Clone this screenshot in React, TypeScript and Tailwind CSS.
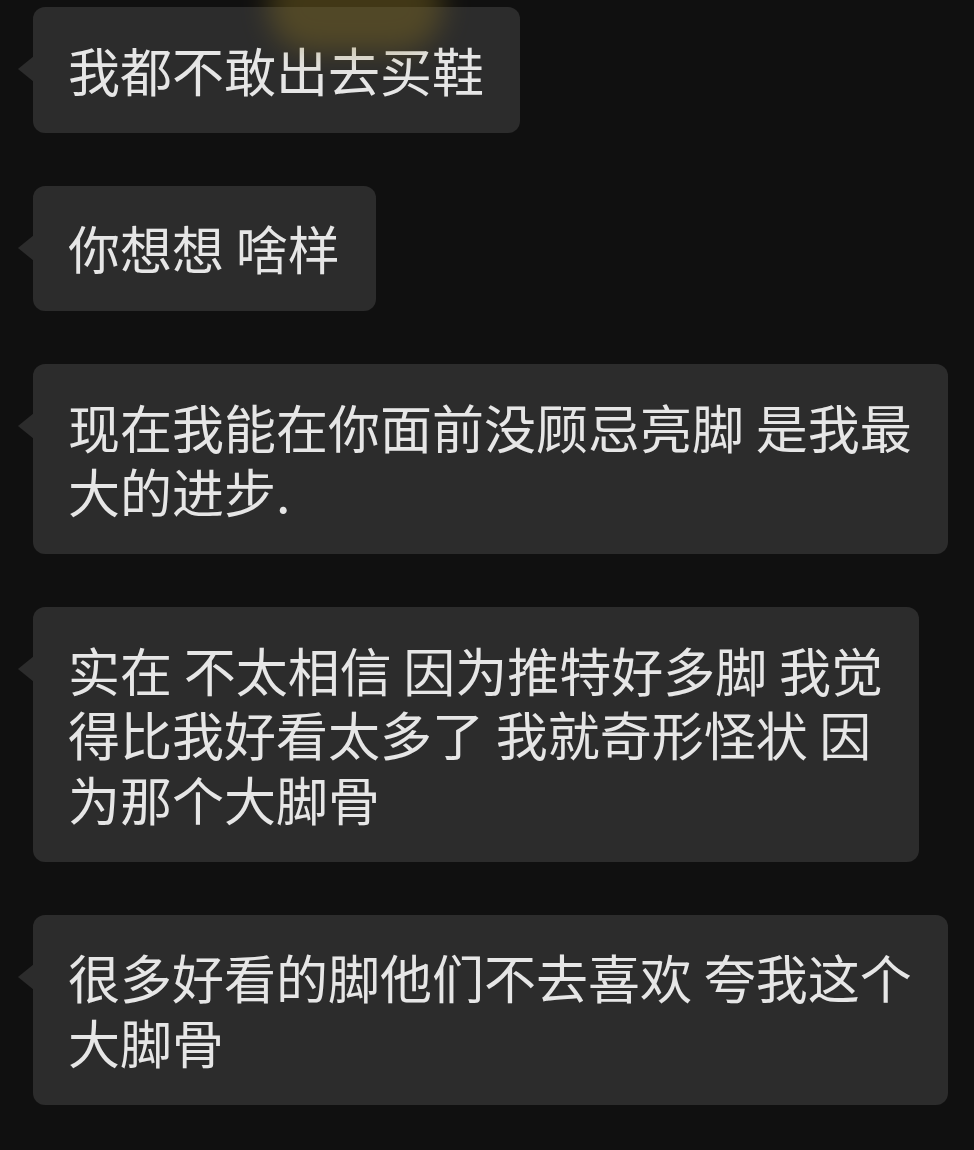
const messages: string[][] = [
  ['我都不敢出去买鞋'],
  ['你想想 啥样'],
  ['现在我能在你面前没顾忌亮脚 是我最', '大的进步.'],
  ['实在 不太相信 因为推特好多脚 我觉', '得比我好看太多了 我就奇形怪状 因', '为那个大脚骨'],
  ['很多好看的脚他们不去喜欢 夸我这个', '大脚骨'],
];

function Bubble({ lines }: { lines: string[] }) {
  return (
    <div className="relative ml-[33px] w-fit rounded-xl bg-[#2c2c2c] pl-[35px] pr-[36px] py-[30.5px]">
      {/* tail */}
      <div className="absolute left-[-15px] top-[49px] h-0 w-0 border-y-[13px] border-r-[16px] border-y-transparent border-r-[#2c2c2c]" />
      {lines.map((line, i) => (
        <div key={i} className="whitespace-pre text-[52px] leading-[64.5px] text-[#e6e6e6]">
          {line}
        </div>
      ))}
    </div>
  );
}

export default function App() {
  return (
    <div
      className="relative min-h-[1150px] w-[974px] overflow-hidden bg-[#101010] pt-[7px]"
      style={{ fontFamily: '"Noto Sans CJK SC", "Noto Sans", sans-serif' }}
    >
      {/* faint yellow glare at the top */}
      <div className="pointer-events-none absolute left-[268px] top-[-38px] z-10 h-[90px] w-[175px] rounded-full bg-[#8a7220] opacity-40 blur-[14px]" />
      <div className="flex flex-col gap-[53px]">
        {messages.map((m, i) => (
          <Bubble key={i} lines={m} />
        ))}
      </div>
    </div>
  );
}
